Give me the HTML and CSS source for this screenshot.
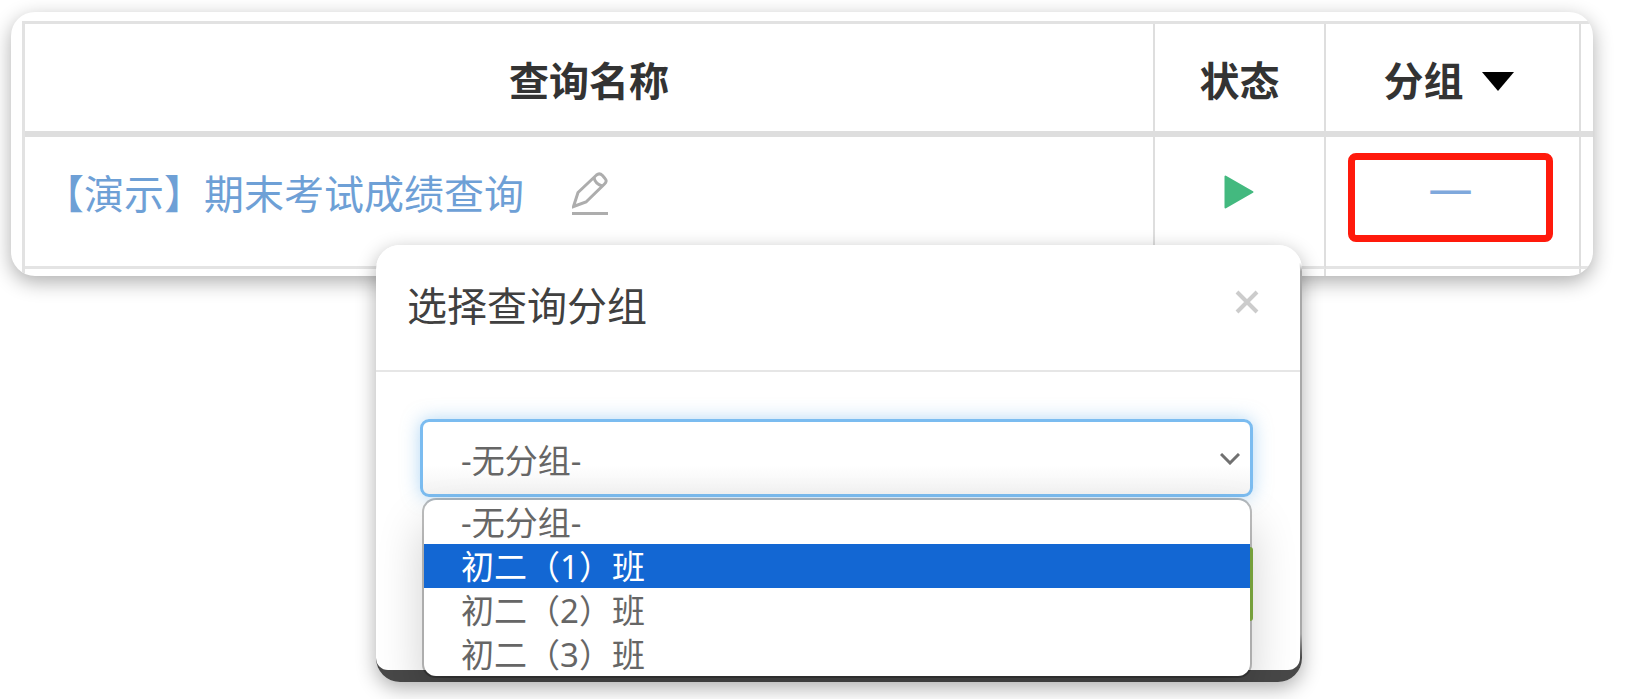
FILE: index.html
```html
<!DOCTYPE html>
<html lang="zh-CN">
<head>
<meta charset="utf-8">
<meta name="viewport" content="width=device-width, initial-scale=1">
<title>选择查询分组</title>
<link rel="stylesheet" href="styles.css">
</head>
<body>
<main class="page">
  <section class="card">
    <table class="queries">
      <colgroup>
        <col>
        <col class="col-status">
        <col class="col-group">
        <col class="col-more">
      </colgroup>
      <thead>
        <tr>
          <th scope="col">查询名称</th>
          <th scope="col">状态</th>
          <th scope="col">
            <span class="sort">分组
              <svg class="sort-icon" viewBox="0 0 32 19" aria-hidden="true"><path d="M0 0H32L16 19Z"/></svg>
            </span>
          </th>
          <td></td>
        </tr>
      </thead>
      <tbody>
        <tr>
          <td>
            <div class="name">
              <a class="name-link" href="#">【演示】期末考试成绩查询</a>
              <button class="icon-button" type="button" aria-label="编辑">
                <svg class="edit-icon" viewBox="0 0 36 44" aria-hidden="true">
                  <path d="M1.500 34.500L6 20.500L24.500 3Q27.500 0.500 30.500 3.500L33 6.500Q35.500 9 32.500 12L14 30Z"/>
                  <path d="M22 5.500Q23 11.500 30 14"/>
                  <path d="M0 41.500H36"/>
                </svg>
              </button>
            </div>
          </td>
          <td>
            <div class="status">
              <button class="icon-button" type="button" aria-label="运行">
                <svg class="play-icon" viewBox="0 0 30 34" aria-hidden="true"><path d="M1.500 1.500V32.500L28.500 17Z"/></svg>
              </button>
            </div>
          </td>
          <td><button class="group-button" type="button">—</button></td>
          <td></td>
        </tr>
        <tr class="next-row"><td></td><td></td><td></td><td></td></tr>
      </tbody>
    </table>
  </section>

  <section class="modal" role="dialog" aria-labelledby="modal-title">
    <div class="panel">
      <header class="modal-header">
        <h2 class="modal-title" id="modal-title">选择查询分组</h2>
        <button class="icon-button" type="button" aria-label="关闭">
          <svg class="close-icon" viewBox="0 0 24 24" aria-hidden="true"><path d="M2 2L22 22M22 2L2 22"/></svg>
        </button>
      </header>
      <div class="modal-body">
        <div class="field">
          <select class="select" aria-label="查询分组">
            <option>-无分组-</option>
            <option>初二（1）班</option>
            <option>初二（2）班</option>
            <option>初二（3）班</option>
          </select>
          <svg class="chevron" viewBox="0 0 20 12" aria-hidden="true"><path d="M1 1L10 10L19 1"/></svg>
          <ul class="menu" role="listbox" aria-label="查询分组">
            <li class="option" role="option">-无分组-</li>
            <li class="option option-active" role="option" aria-selected="true">初二（1）班</li>
            <li class="option" role="option">初二（2）班</li>
            <li class="option" role="option">初二（3）班</li>
          </ul>
          <div class="confirm-edge"></div>
        </div>
      </div>
    </div>
  </section>
</main>
</body>
</html>
```
FILE: styles.css
```css
* {
  box-sizing: border-box;
}

body {
  margin: 0;
  background: #fff;
  color: #333;
  font-family: "Noto Sans", "Noto Sans CJK SC", sans-serif;
}

button,
select {
  font-family: inherit;
}

.page {
  position: relative;
  min-height: 699px;
  padding: 12px 36px 0 11px;
}

.card {
  overflow: hidden;
  padding: 9px 0 0 11px;
  border-radius: 24px;
  background: #fff;
  box-shadow: 0 6px 20px rgba(0, 0, 0, 0.32);
}

/* Query table */
.queries {
  width: 100%;
  table-layout: fixed;
  border-collapse: separate;
  border-spacing: 0;
  border-top: 3px solid #e2e2e2;
  border-left: 3px solid #e2e2e2;
}

.col-status {
  width: 171px;
}

.col-group {
  width: 255px;
}

.col-more {
  width: 12px;
}

.queries th,
.queries td {
  padding: 0;
  border-right: 2px solid #dedede;
  border-bottom: 3px solid #e4e4e4;
}

.queries th:last-child,
.queries td:last-child {
  border-right: 0;
}

.queries thead th,
.queries thead td {
  height: 113px;
  padding-top: 7px;
  border-bottom: 6px solid #dedede;
  font-size: 40px;
  font-weight: 700;
  line-height: 56px;
}

.queries tbody td {
  height: 132px;
}

.queries .next-row td {
  height: 7px;
  border-bottom: 0;
}

.sort {
  display: flex;
  align-items: center;
  justify-content: center;
  gap: 18px;
  padding-right: 8px;
}

.sort-icon {
  width: 32px;
  height: 19px;
  fill: #000;
}

.name {
  display: flex;
  align-items: center;
  gap: 48px;
  padding: 0 0 16px 19px;
}

.name-link {
  color: #6ea0d6;
  font-size: 40px;
  line-height: 56px;
  text-decoration: none;
  white-space: nowrap;
}

.icon-button {
  display: flex;
  padding: 0;
  border: 0;
  background: none;
  cursor: pointer;
}

.edit-icon {
  width: 36px;
  height: 44px;
  fill: none;
  stroke: #adadad;
  stroke-width: 3;
}

.status {
  display: flex;
  justify-content: center;
  padding: 0 2px 20px 0;
}

.play-icon {
  width: 30px;
  height: 34px;
  fill: #43b97f;
  stroke: #43b97f;
  stroke-width: 2;
  stroke-linejoin: round;
}

.group-button {
  display: block;
  width: 205px;
  height: 89px;
  margin: 0 auto 8px 22px;
  padding: 0 0 22px;
  border: 7px solid #ff1a0c;
  border-radius: 8px;
  background: none;
  color: #7fa8dc;
  font-size: 44px;
  line-height: 52px;
  cursor: pointer;
}

/* Group picker */
.modal {
  position: absolute;
  top: 245px;
  right: 327px;
  left: 376px;
  overflow: hidden;
  padding: 0 2px 12px 0;
  border-radius: 24px;
  background: linear-gradient(to top, #484848 24px, #a8a8a8 48px, #a8a8a8 94%, #fff 96%);
  box-shadow: 0 6px 20px rgba(0, 0, 0, 0.32);
}

.panel {
  border-radius: 24px 24px 12px 12px;
  background: #fff;
}

.modal-header {
  display: flex;
  align-items: center;
  justify-content: space-between;
  height: 127px;
  padding: 0 41px 12px 31px;
  border-bottom: 2px solid #e6e6e6;
}

.modal-title {
  margin: 0;
  padding-top: 8px;
  color: #404040;
  font-size: 40px;
  font-weight: 400;
  line-height: 56px;
}

.close-icon {
  width: 24px;
  height: 24px;
  fill: none;
  stroke: #ccc;
  stroke-width: 4;
}

.modal-body {
  padding: 47px 47px 173px 44px;
}

.field {
  position: relative;
}

.select {
  display: block;
  width: 100%;
  height: 78px;
  padding: 6px 60px 0 38px;
  border: 3px solid #7bbcf0;
  border-radius: 9px;
  outline: 0;
  background: linear-gradient(#fff 60%, #f3f3f3);
  box-shadow: 0 0 18px rgba(102, 175, 233, 0.5);
  color: #666;
  font-size: 33px;
  line-height: 44px;
  appearance: none;
}

.chevron {
  position: absolute;
  top: 34px;
  right: 13px;
  width: 20px;
  height: 12px;
  fill: none;
  stroke: #707070;
  stroke-width: 3;
  pointer-events: none;
}

.confirm-edge {
  position: absolute;
  top: 128px;
  right: 0;
  width: 3px;
  height: 74px;
  border-radius: 0 3px 3px 0;
  background: #76a03c;
}

.menu {
  position: absolute;
  top: 81px;
  right: 3px;
  left: 4px;
  margin: 0;
  padding: 0;
  border-radius: 12px;
  background: #fff;
  box-shadow: 0 0 0 2px rgba(0, 0, 0, 0.25), 0 24px 48px rgba(0, 0, 0, 0.2);
  list-style: none;
}

.option {
  height: 44px;
  padding: 2px 0 0 37px;
  color: #666;
  font-size: 33px;
  line-height: 42px;
}

.option-active {
  background: #1367d3;
  color: #fff;
}
```
